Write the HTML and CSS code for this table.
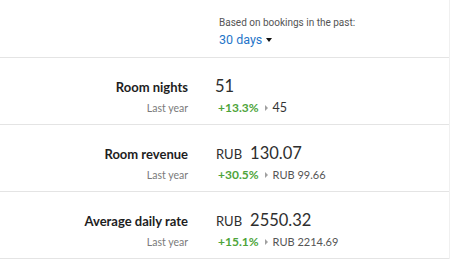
FILE: index.html
```html
<!DOCTYPE html>
<html>
<head>
<meta charset="utf-8">
<link rel="stylesheet" href="styles.css">
</head>
<body>
<div class="panel">
  <div class="header">
    <div class="header-body">
      <div class="caption">Based on bookings in the past:</div>
      <div class="period">30 days <span class="caret"></span></div>
    </div>
  </div>
  <div class="row">
    <div class="label">Room nights</div>
    <div class="value"><span class="num">51</span></div>
    <div class="sub">Last year</div>
    <div class="compare"><span class="pct">+13.3%</span><span class="tri"></span><span class="prev big">45</span></div>
  </div>
  <div class="row">
    <div class="label">Room revenue</div>
    <div class="value"><span class="cur">RUB</span><span class="num">130.07</span></div>
    <div class="sub">Last year</div>
    <div class="compare"><span class="pct">+30.5%</span><span class="tri"></span><span class="prev">RUB 99.66</span></div>
  </div>
  <div class="row">
    <div class="label">Average daily rate</div>
    <div class="value"><span class="cur">RUB</span><span class="num">2550.32</span></div>
    <div class="sub">Last year</div>
    <div class="compare"><span class="pct">+15.1%</span><span class="tri"></span><span class="prev">RUB 2214.69</span></div>
  </div>
</div>
</body>
</html>
```
FILE: styles.css
```css
html, body {
  margin: 0;
  padding: 0;
  background: #fff;
}
.panel {
  width: 449px;
  height: 259px;
  border-right: 1px solid #f0f0f0;
  font-family: Lato, "Open Sans", sans-serif;
  color: #262626;
  overflow: hidden;
}
.header {
  height: 57px;
  border-bottom: 1px solid #e4e4e4;
  display: grid;
  grid-template-columns: 188px 1fr;
  column-gap: 31px;
}
.header-body {
  grid-column: 2;
  padding-top: 16px;
}
.caption {
  font-family: Roboto, "Liberation Sans", sans-serif;
  font-size: 10px;
  line-height: 14px;
  color: #555;
}
.period {
  font-family: Roboto, "Liberation Sans", sans-serif;
  font-size: 12.5px;
  line-height: 18px;
  margin-top: 1px;
  color: #1f75c9;
  display: flex;
  align-items: center;
}
.caret {
  display: inline-block;
  width: 0;
  height: 0;
  margin-left: 4px;
  border-left: 3.5px solid transparent;
  border-right: 3.5px solid transparent;
  border-top: 4px solid #111;
}
.row {
  display: grid;
  grid-template-columns: 188px 1fr;
  grid-template-rows: 24px 20px;
  column-gap: 27px;
  align-items: baseline;
  padding: 18px 0 4px;
  border-bottom: 1px solid #e4e4e4;
}
.label {
  text-align: right;
  font-weight: 700;
  font-size: 13px;
  color: #1e1e1e;
}
.value {
  display: flex;
  align-items: baseline;
  gap: 8px;
  color: #2e2e2e;
}
.cur {
  font-size: 13px;
  padding-left: 1px;
}
.num {
  font-size: 16.5px;
}
.sub {
  text-align: right;
  font-size: 10.5px;
  color: #7a7a7a;
}
.compare {
  display: flex;
  align-items: baseline;
  padding-left: 3px;
}
.pct {
  font-size: 12px;
  font-weight: 700;
  color: #4ea43a;
}
.tri {
  display: inline-block;
  width: 0;
  height: 0;
  margin: 0 5px 0 6px;
  border-top: 3px solid transparent;
  border-bottom: 3px solid transparent;
  border-left: 3px solid #a0a0a0;
  align-self: center;
}
.prev {
  font-size: 11px;
  color: #555;
}
.prev.big {
  font-size: 12.5px;
  color: #333;
}
```
